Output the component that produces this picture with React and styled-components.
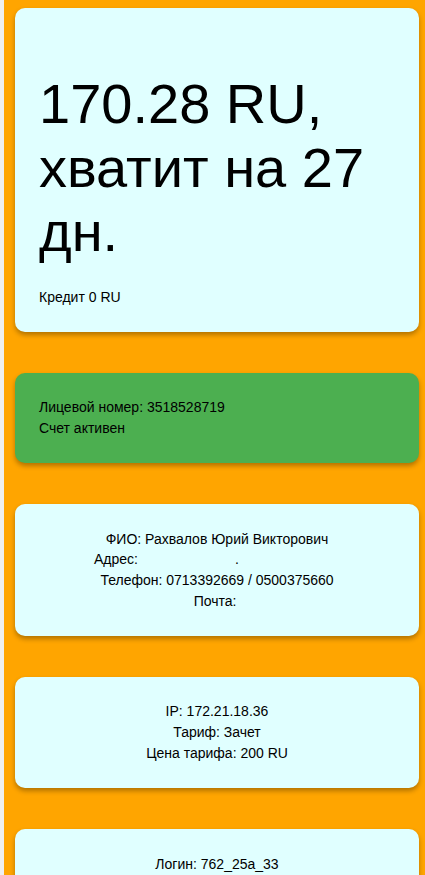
import React from "react";
import styled, { createGlobalStyle } from "styled-components";

const GlobalStyle = createGlobalStyle`
  html, body {
    margin: 0;
    padding: 0;
    background: #efefef;
  }
  body {
    font-family: "Liberation Sans", Arial, sans-serif;
    color: #000;
  }
`;

const Page = styled.main`
  margin-left: 4px;
  min-height: 875px;
  background: #ffa500;
  padding: 8px 6px 0 11px;
  display: flex;
  flex-direction: column;
  gap: 41px;
`;

const Card = styled.section`
  background: ${(p) => (p.$tone === "green" ? "#4caf50" : "#e0ffff")};
  border-radius: 10px;
  box-shadow: 0 3px 5px rgba(0, 0, 0, 0.3);
  padding: 24.5px 24px;
  font-size: 14px;
  line-height: 20.7px;
  text-align: ${(p) => (p.$center ? "center" : "left")};
`;

const Balance = styled.h1`
  margin: 39px 0 23px;
  font-size: 56px;
  line-height: 64px;
  font-weight: 400;
`;

const Line = styled.div`
  white-space: pre;
`;

const NBSP = "\u00a0";

export default function App() {
  return (
    <>
      <GlobalStyle />
      <Page>
        <Card>
          <Balance>170.28 RU, хватит на 27 дн.</Balance>
          <Line>Кредит 0 RU</Line>
        </Card>

        <Card $tone="green">
          <Line>Лицевой номер: 3518528719</Line>
          <Line>Счет активен</Line>
        </Card>

        <Card $center>
          <Line>ФИО: Рахвалов Юрий Викторович</Line>
          <Line>
            {"Адрес: " + NBSP.repeat(24) + "." + NBSP.repeat(26)}
          </Line>
          <Line>Телефон: 0713392669 / 0500375660</Line>
          <Line>Почта: </Line>
        </Card>

        <Card $center>
          <Line>IP: 172.21.18.36</Line>
          <Line>Тариф: Зачет</Line>
          <Line>Цена тарифа: 200 RU</Line>
        </Card>

        <Card $center>
          <Line>Логин: 762_25а_33</Line>
          <Line>{NBSP}</Line>
          <Line>{NBSP}</Line>
        </Card>
      </Page>
    </>
  );
}
